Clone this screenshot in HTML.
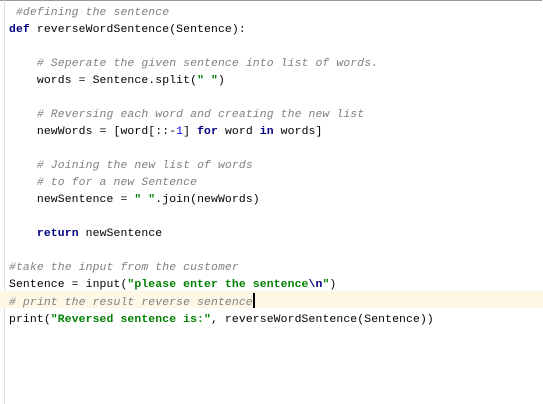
<!DOCTYPE html>
<html><head><style>
body{margin:0;width:543px;height:404px;background:#fff;overflow:hidden;position:relative;font-family:"Liberation Mono","Courier New",monospace;font-size:11.42px;}
.top{position:absolute;left:0;top:0;width:542px;height:1px;background:#999;}
.gut{position:absolute;left:4px;top:0;width:1px;height:404px;background:#ddd;}
.hl{position:absolute;left:0;top:291px;width:543px;height:17px;background:#fdf8e6;}
.code{position:absolute;left:9px;top:4px;white-space:pre;line-height:17px;color:#000;letter-spacing:0.12px;}
.c{color:#808080;font-style:italic}
.k{color:#000080;font-weight:bold}
.s{color:#008000;font-weight:bold}
.n{color:#0000ff}
.cur{display:inline-block;width:2px;height:15px;background:#000;vertical-align:-3px;}
</style></head><body>
<div class="top"></div><div class="gut"></div><div class="hl"></div>
<div class="code"><span class="c"> #defining the sentence</span>
<span class="k">def</span> reverseWordSentence(Sentence):

    <span class="c"># Seperate the given sentence into list of words.</span>
    words = Sentence.split(<span class="s">" "</span>)

    <span class="c"># Reversing each word and creating the new list</span>
    newWords = [word[::-<span class="n">1</span>] <span class="k">for</span> word <span class="k">in</span> words]

    <span class="c"># Joining the new list of words</span>
    <span class="c"># to for a new Sentence</span>
    newSentence = <span class="s">" "</span>.join(newWords)

    <span class="k">return</span> newSentence

<span class="c">#take the input from the customer</span>
Sentence = input(<span class="s">"please enter the sentence<span class="k">\n</span>"</span>)
<span class="c"># print the result reverse sentence</span><span class="cur"></span>
print(<span class="s">"Reversed sentence is:"</span>, reverseWordSentence(Sentence))</div>
</body></html>
